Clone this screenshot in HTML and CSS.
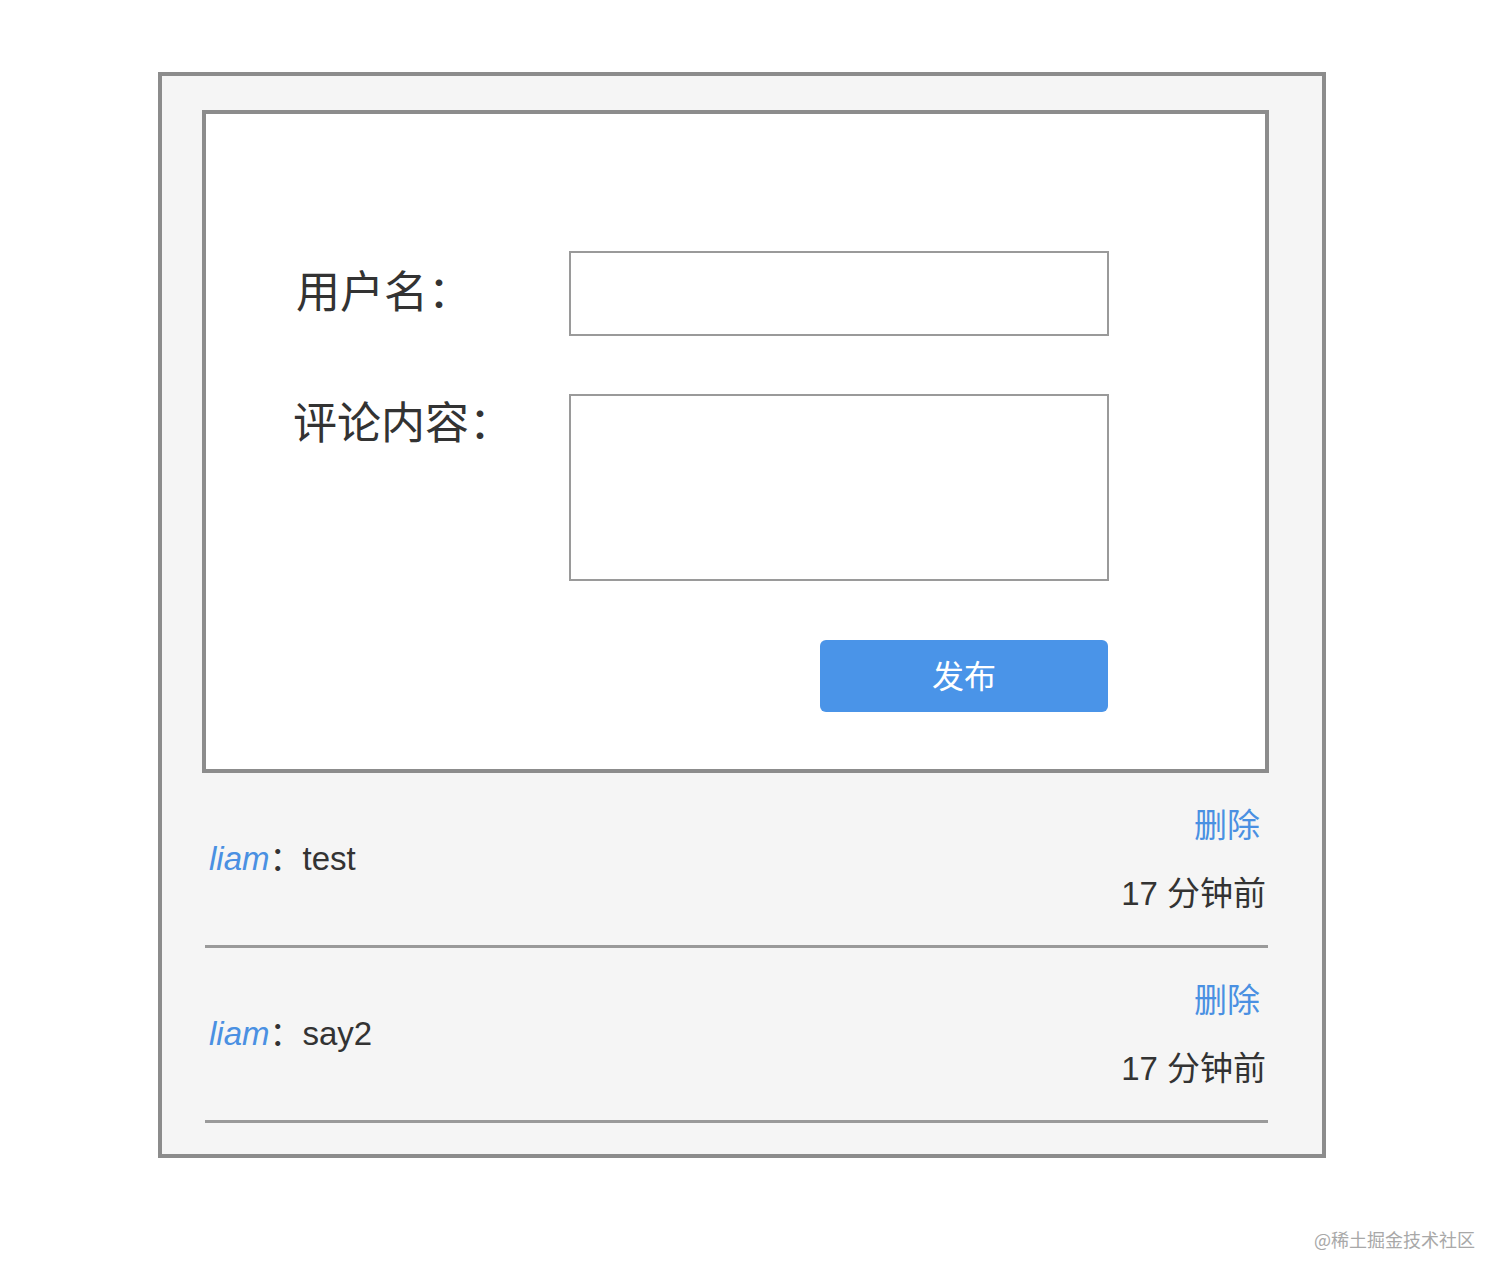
FILE: index.html
```html
<!DOCTYPE html>
<html lang="zh-CN">
<head>
<meta charset="utf-8">
<title>评论</title>
<link rel="stylesheet" href="styles.css">
</head>
<body>
<div class="app">
  <form class="form-box">
    <div class="row">
      <label class="label">用户名：</label>
      <input class="input" type="text">
    </div>
    <div class="row row-top">
      <label class="label">评论内容：</label>
      <textarea class="textarea"></textarea>
    </div>
    <div class="actions">
      <button type="button" class="btn">发布</button>
    </div>
  </form>
  <ul class="list">
    <li class="item">
      <div class="content"><span class="user">liam</span>：test</div>
      <div class="side">
        <a class="del">删除</a>
        <span class="time">17 分钟前</span>
      </div>
    </li>
    <li class="item">
      <div class="content"><span class="user">liam</span>：say2</div>
      <div class="side">
        <a class="del">删除</a>
        <span class="time">17 分钟前</span>
      </div>
    </li>
  </ul>
</div>
<div class="watermark">@稀土掘金技术社区</div>
</body>
</html>
```

FILE: styles.css
```css
html, body {
  margin: 0;
  padding: 0;
  background: #ffffff;
}
body {
  font-family: "Liberation Sans", "Noto Sans CJK SC", sans-serif;
  color: #333333;
  position: relative;
  min-height: 1282px;
}
.app {
  width: 1067px;
  margin: 72px 0 0 158px;
  padding: 34px 53px 31px 40px;
  border: 4px solid #8c8c8c;
  background: #f5f5f5;
}
.form-box {
  background: #ffffff;
  border: 4px solid #8c8c8c;
  padding: 137px 0 57px 0;
  margin: 0;
}
.row {
  display: flex;
  align-items: center;
}
.row-top {
  align-items: flex-start;
  margin-top: 58px;
}
.label {
  width: 273px;
  padding-left: 90px;
  font-size: 44px;
  line-height: 60px;
  color: #333333;
  font-family: "Noto Sans CJK SC", sans-serif;
  margin-bottom: 10px;
}
.row-top .label {
  margin-top: -4px;
  margin-bottom: 0;
  padding-left: 87px;
  width: 276px;
}
.input {
  box-sizing: border-box;
  width: 540px;
  height: 85px;
  border: 2px solid #9a9a9a;
  margin: 0;
  padding: 0;
  background: #fff;
}
.textarea {
  box-sizing: border-box;
  width: 540px;
  height: 187px;
  border: 2px solid #9a9a9a;
  margin: 0;
  padding: 0;
  resize: none;
  background: #fff;
}
.actions {
  display: flex;
  margin-top: 59px;
  padding-left: 614px;
}
.btn {
  width: 288px;
  height: 72px;
  border: none;
  border-radius: 6px;
  background: #4a94e8;
  color: #ffffff;
  font-family: "Noto Sans CJK SC", sans-serif;
  font-size: 32px;
  padding: 0 0 5px 0;
}
.list {
  list-style: none;
  margin: 0 1px 0 3px;
  padding: 0;
}
.item {
  display: flex;
  align-items: center;
  justify-content: space-between;
  padding: 25px 2px 26px 4px;
  border-bottom: 3px solid #9a9a9a;
}
.content {
  font-size: 33px;
  line-height: 50px;
}
.user {
  font-style: italic;
  color: #4a90e2;
}
.side {
  display: flex;
  flex-direction: column;
  align-items: flex-end;
}
.del {
  font-family: "Noto Sans CJK SC", sans-serif;
  font-size: 33px;
  line-height: 50px;
  color: #4a90e2;
  margin-right: 6px;
  margin-bottom: 21px;
}
.time {
  font-size: 33px;
  line-height: 50px;
  color: #333333;
}
.watermark {
  position: absolute;
  right: 33px;
  top: 1226px;
  font-family: "Noto Sans CJK SC", sans-serif;
  font-size: 18px;
  line-height: 26px;
  color: #a8a8a8;
}
```
